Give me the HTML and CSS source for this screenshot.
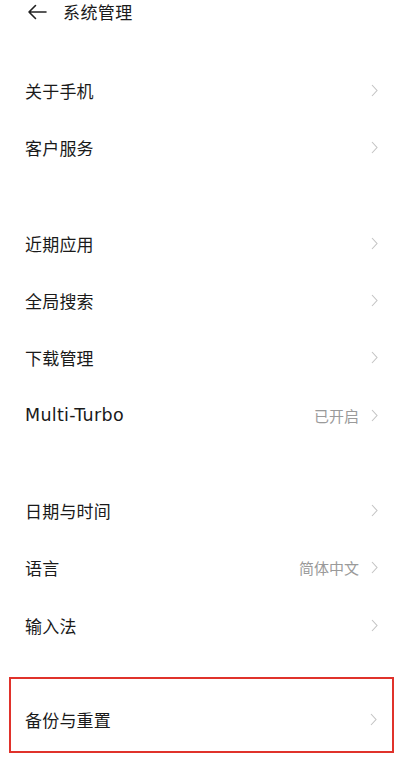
FILE: index.html
```html
<!DOCTYPE html>
<html lang="zh">
<head>
<meta charset="utf-8">
<title>系统管理</title>
<link rel="stylesheet" href="styles.css">
</head>
<body>
<div class="page">
  <header class="topbar">
    <svg class="back" viewBox="0 0 20 16" width="20" height="16"><path d="M19 8H2M8.5 1.5L2 8l6.5 6.5" fill="none" stroke="#222" stroke-width="1.6" stroke-linecap="round" stroke-linejoin="round"/></svg>
    <span class="title">系统管理</span>
  </header>

  <section class="group">
    <div class="row"><span class="label">关于手机</span><span class="right"><svg class="chev" viewBox="0 0 7 13" width="7" height="13"><path d="M1 1l5 5.5L1 12" fill="none" stroke="#c4c4c4" stroke-width="1.1"/></svg></span></div>
    <div class="row"><span class="label">客户服务</span><span class="right"><svg class="chev" viewBox="0 0 7 13" width="7" height="13"><path d="M1 1l5 5.5L1 12" fill="none" stroke="#c4c4c4" stroke-width="1.1"/></svg></span></div>
  </section>

  <section class="group">
    <div class="row"><span class="label">近期应用</span><span class="right"><svg class="chev" viewBox="0 0 7 13" width="7" height="13"><path d="M1 1l5 5.5L1 12" fill="none" stroke="#c4c4c4" stroke-width="1.1"/></svg></span></div>
    <div class="row"><span class="label">全局搜索</span><span class="right"><svg class="chev" viewBox="0 0 7 13" width="7" height="13"><path d="M1 1l5 5.5L1 12" fill="none" stroke="#c4c4c4" stroke-width="1.1"/></svg></span></div>
    <div class="row"><span class="label">下载管理</span><span class="right"><svg class="chev" viewBox="0 0 7 13" width="7" height="13"><path d="M1 1l5 5.5L1 12" fill="none" stroke="#c4c4c4" stroke-width="1.1"/></svg></span></div>
    <div class="row"><span class="label latin">Multi-Turbo</span><span class="right"><span class="value">已开启</span><svg class="chev" viewBox="0 0 7 13" width="7" height="13"><path d="M1 1l5 5.5L1 12" fill="none" stroke="#c4c4c4" stroke-width="1.1"/></svg></span></div>
  </section>

  <section class="group">
    <div class="row"><span class="label">日期与时间</span><span class="right"><svg class="chev" viewBox="0 0 7 13" width="7" height="13"><path d="M1 1l5 5.5L1 12" fill="none" stroke="#c4c4c4" stroke-width="1.1"/></svg></span></div>
    <div class="row"><span class="label">语言</span><span class="right"><span class="value">简体中文</span><svg class="chev" viewBox="0 0 7 13" width="7" height="13"><path d="M1 1l5 5.5L1 12" fill="none" stroke="#c4c4c4" stroke-width="1.1"/></svg></span></div>
    <div class="row"><span class="label">输入法</span><span class="right"><svg class="chev" viewBox="0 0 7 13" width="7" height="13"><path d="M1 1l5 5.5L1 12" fill="none" stroke="#c4c4c4" stroke-width="1.1"/></svg></span></div>
  </section>

  <section class="group highlight">
    <div class="row"><span class="label">备份与重置</span><span class="right"><svg class="chev" viewBox="0 0 7 13" width="7" height="13"><path d="M1 1l5 5.5L1 12" fill="none" stroke="#c4c4c4" stroke-width="1.1"/></svg></span></div>
  </section>
</div>
</body>
</html>
```

FILE: styles.css
```css
html, body {
  margin: 0;
  padding: 0;
  background: #ffffff;
}
body {
  font-family: "Noto Sans CJK SC", "Noto Sans", sans-serif;
  color: #1a1a1a;
  overflow: hidden;
}
.page {
  width: 413px;
  height: 761px;
  overflow: hidden;
}
.topbar {
  height: 23px;
  display: flex;
  align-items: center;
  padding-left: 27px;
  gap: 16px;
}
.back {
  display: block;
}
.title {
  font-size: 17px;
  line-height: 23px;
  font-weight: 400;
  color: #1a1a1a;
  letter-spacing: 0.4px;
}
.group {
  margin-top: 38px;
}
.group:first-of-type {
  margin-top: 39px;
}
.row {
  height: 57.3px;
  display: flex;
  align-items: center;
  justify-content: space-between;
  padding-left: 25px;
  padding-right: 35px;
}
.label {
  font-size: 17px;
  color: #1a1a1a;
  letter-spacing: 0.2px;
}
.label.latin {
  font-family: "DejaVu Sans", "Noto Sans", sans-serif;
  font-size: 17.5px;
  letter-spacing: 0.3px;
}
.right {
  display: flex;
  align-items: center;
  gap: 12px;
}
.value {
  font-size: 15px;
  color: #9a9a9a;
}
.chev {
  display: block;
}
.highlight {
  margin-top: 23.3px;
  margin-left: 9px;
  width: 381px;
  border: 2px solid #e0322b;
  padding-top: 12.3px;
  padding-bottom: 2.4px;
}
.highlight .row {
  padding-left: 14px;
  padding-right: 15px;
}
```
